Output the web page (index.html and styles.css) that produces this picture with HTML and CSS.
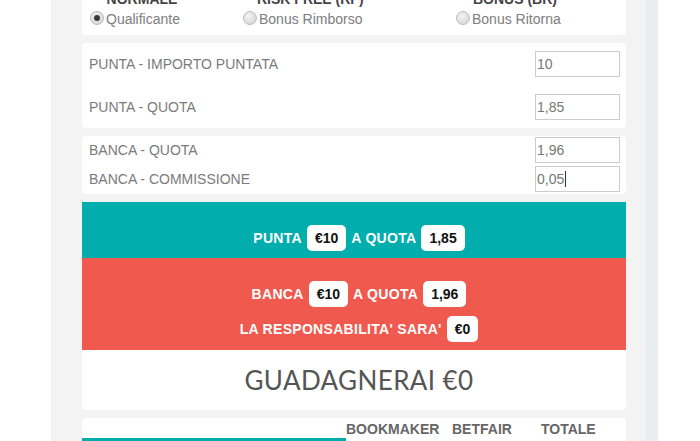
FILE: index.html
```html
<!DOCTYPE html>
<html>
<head>
<meta charset="utf-8">
<link rel="stylesheet" href="styles.css">
</head>
<body>
<div class="shell">
  <div class="panel">
    <div class="card modes">
      <div class="mode m1">
        <div class="mode-title">NORMALE</div>
        <div class="mode-opt"><span class="radio checked"></span>Qualificante</div>
      </div>
      <div class="mode m2">
        <div class="mode-title">RISK FREE (RF)</div>
        <div class="mode-opt"><span class="radio"></span>Bonus Rimborso</div>
      </div>
      <div class="mode m3">
        <div class="mode-title">BONUS (BR)</div>
        <div class="mode-opt"><span class="radio"></span>Bonus Ritorna</div>
      </div>
    </div>

    <div class="card fields punta">
      <div class="row"><span class="lbl">PUNTA - IMPORTO PUNTATA</span><span class="inp">10</span></div>
      <div class="row"><span class="lbl">PUNTA - QUOTA</span><span class="inp">1,85</span></div>
    </div>

    <div class="card fields banca">
      <div class="row"><span class="lbl">BANCA - QUOTA</span><span class="inp">1,96</span></div>
      <div class="row"><span class="lbl">BANCA - COMMISSIONE</span><span class="inp">0,05<span class="caret"></span></span></div>
    </div>

    <div class="result">
      <div class="band teal">
        <div class="line">PUNTA <span class="badge">€10</span> A QUOTA <span class="badge">1,85</span></div>
      </div>
      <div class="band red">
        <div class="line">BANCA <span class="badge">€10</span> A QUOTA <span class="badge">1,96</span></div>
        <div class="line">LA RESPONSABILITA' SARA' <span class="badge">€0</span></div>
      </div>
    </div>

    <div class="card gain">GUADAGNERAI €0</div>

    <div class="card table">
      <div class="th blank"></div>
      <div class="th">BOOKMAKER</div>
      <div class="th">BETFAIR</div>
      <div class="th tot">TOTALE</div>
      <div class="tab"></div>
    </div>
  </div>
  <div class="strip"></div>
</div>
</body>
</html>
```

FILE: styles.css
```css
html, body {
  margin: 0;
  padding: 0;
  background: #ffffff;
  font-family: "Liberation Sans", Arial, sans-serif;
  overflow: hidden;
}

.shell {
  display: flex;
  margin-left: 51px;
  width: 607px;
  margin-top: -11px;
  background: #f3f3f3;
  min-height: 480px;
}

.panel {
  width: 544px;
  padding-left: 31px;
  padding-right: 20px;
}

.strip {
  width: 12px;
  background: #eaedef;
}

.card {
  background: #ffffff;
  border-radius: 4px;
  margin-bottom: 8px;
}

/* modes */
.modes {
  display: flex;
  padding: 0 8px 6px 8px;
  border-radius: 0 0 4px 4px;
}
.mode { display: flex; flex-direction: column; align-items: flex-start; }
.m1 { width: 153px; }
.m2 { width: 213px; }
.mode-title {
  font-weight: bold;
  font-size: 14px;
  line-height: 20px;
  color: #444;
  white-space: nowrap;
  text-align: center;
  align-self: flex-start;
}
.m1 .mode-title { width: 74px; padding-left: 15px; }
.m2 .mode-title { width: 104px; padding-left: 14px; }
.m3 .mode-title { width: 88px; padding-left: 15px; }
.mode-opt {
  display: flex;
  align-items: center;
  font-size: 14px;
  line-height: 20px;
  color: #7d7d7d;
  white-space: nowrap;
}
.radio {
  width: 12px;
  height: 12px;
  border-radius: 50%;
  border: 1px solid #bdbdbd;
  background: radial-gradient(circle at 40% 35%, #f4f4f4 0%, #dadada 70%, #c9c9c9 100%);
  margin-right: 2px;
  margin-top: -2px;
  position: relative;
  box-sizing: content-box;
}
.radio.checked::after {
  content: "";
  position: absolute;
  left: 3px;
  top: 3px;
  width: 6px;
  height: 6px;
  border-radius: 50%;
  background: #3a3a3a;
}

/* fields */
.fields {
  display: flex;
  flex-direction: column;
}
.punta { padding: 8px 6px 8px 7px; gap: 17px; }
.banca { padding: 1px 6px 2px 7px; gap: 3px; }
.row {
  display: flex;
  justify-content: space-between;
  align-items: center;
}
.lbl {
  font-size: 14px;
  color: #7b7b7b;
}
.inp {
  width: 82px;
  height: 24px;
  border: 1px solid #cccccc;
  font-size: 14px;
  line-height: 24px;
  color: #777;
  padding-left: 1px;
  display: flex;
  align-items: center;
}
.caret {
  display: inline-block;
  width: 1px;
  height: 16px;
  background: #333;
  margin-left: 1px;
}

/* result bands */
.result { margin-bottom: 0; margin-top: 8px; }
.band {
  display: flex;
  flex-direction: column;
  align-items: center;
  gap: 9px;
  color: #ffffff;
  font-weight: bold;
  font-size: 14px;
  letter-spacing: 0.3px;
  padding-left: 10px;
}
.teal { background: #01adad; padding-top: 23px; padding-bottom: 7px; }
.red { background: #f0594e; padding-top: 23px; padding-bottom: 8px; }
.line {
  display: flex;
  align-items: center;
  gap: 5px;
  height: 26px;
}
.badge {
  background: #ffffff;
  color: #111;
  border-radius: 5px;
  height: 26px;
  line-height: 26px;
  padding: 0 8px;
  letter-spacing: 0;
}

/* gain */
.gain {
  height: 60px;
  display: flex;
  align-items: center;
  justify-content: center;
  padding-left: 10px;
  font-family: Lato, "Open Sans", sans-serif;
  font-size: 26px;
  letter-spacing: 0.4px;
  color: #555;
  border-radius: 0 0 4px 4px;
}

/* table */
.table {
  display: grid;
  grid-template-columns: 264px 106px 89px 1fr;
  grid-template-rows: 20px 10px;
}
.th {
  font-weight: bold;
  font-size: 14px;
  line-height: 20px;
  padding-top: 1px;
  color: #666;
}
.tab {
  grid-column: 1 / 2;
  background: #01adad;
}
```
